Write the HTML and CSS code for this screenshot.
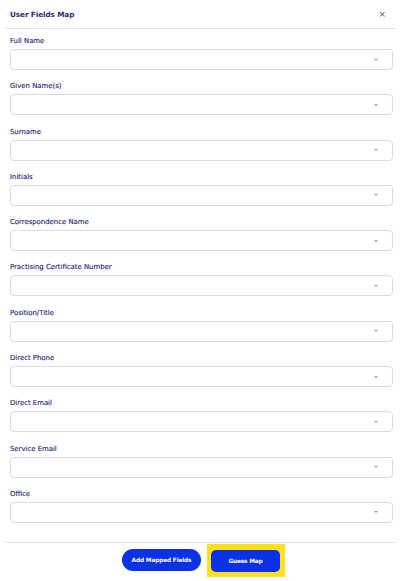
FILE: index.html
```html
<!DOCTYPE html>
<html>
<head>
<meta charset="utf-8">
<link rel="stylesheet" href="styles.css">
</head>
<body>
<div class="modal">
  <div class="header">
    <h1 class="title">User Fields Map</h1>
    <span class="close">&#215;</span>
  </div>
  <div class="body">
    <div class="field"><label class="label">Full Name</label><div class="select"><span class="caret"></span></div></div>
    <div class="field"><label class="label">Given Name(s)</label><div class="select"><span class="caret"></span></div></div>
    <div class="field"><label class="label">Surname</label><div class="select"><span class="caret"></span></div></div>
    <div class="field"><label class="label">Initials</label><div class="select"><span class="caret"></span></div></div>
    <div class="field"><label class="label">Correspondence Name</label><div class="select"><span class="caret"></span></div></div>
    <div class="field"><label class="label">Practising Certificate Number</label><div class="select"><span class="caret"></span></div></div>
    <div class="field"><label class="label">Position/Title</label><div class="select"><span class="caret"></span></div></div>
    <div class="field"><label class="label">Direct Phone</label><div class="select"><span class="caret"></span></div></div>
    <div class="field"><label class="label">Direct Email</label><div class="select"><span class="caret"></span></div></div>
    <div class="field"><label class="label">Service Email</label><div class="select"><span class="caret"></span></div></div>
    <div class="field"><label class="label">Office</label><div class="select"><span class="caret"></span></div></div>
  </div>
  <div class="footer">
    <button class="btn btn-pill">Add Mapped Fields</button>
    <span class="highlight"><button class="btn btn-square">Guess Map</button></span>
  </div>
</div>
</body>
</html>
```

FILE: styles.css
```css
* { box-sizing: border-box; }
html, body { margin: 0; padding: 0; background: #ffffff; }
body {
  font-family: "DejaVu Sans", "Open Sans", sans-serif;
  color: #27307a;
  width: 407px;
  height: 581px;
  overflow: hidden;
}
.modal { width: 407px; }
.header {
  height: 29px;
  margin: 0 11px 0 5px;
  padding: 0 10px 0 5px;
  display: flex;
  align-items: center;
  justify-content: space-between;
  border-bottom: 1px solid #e2e4ea;
}
.title {
  margin: 0;
  font-size: 7.3px;
  font-weight: bold;
  color: #1f2a78;
  letter-spacing: -0.1px;
}
.close {
  font-size: 9px;
  color: #555a66;
  line-height: 1;
}
.body {
  padding: 7px 14px 0 10px;
  display: flex;
  flex-direction: column;
  gap: 11.3px;
}
.field { display: flex; flex-direction: column; }
.label {
  font-size: 6.9px;
  line-height: 10px;
  height: 10px;
  margin-bottom: 3px;
  color: #1f2a78;
  font-weight: normal;
  -webkit-text-stroke: 0.15px #1f2a78;
}
.select {
  height: 21px;
  border: 1px solid #d8dbe2;
  border-radius: 4px;
  background: #fff;
  display: flex;
  align-items: center;
  justify-content: flex-end;
  padding-right: 14px;
}
.caret {
  width: 0;
  height: 0;
  border-left: 2px solid transparent;
  border-right: 2px solid transparent;
  border-top: 2px solid #9aa0ad;
}
.footer {
  margin: 19px 11px 0 5px;
  border-top: 1px solid #e2e4ea;
  padding-top: 1px;
  display: flex;
  justify-content: center;
  align-items: center;
  gap: 6px;
  padding-left: 6px;
}
.btn {
  font-family: "DejaVu Sans", "Open Sans", sans-serif;
  font-size: 5.8px;
  font-weight: bold;
  color: #ffffff;
  background: #0a31e3;
  border: none;
  height: 22px;
  letter-spacing: -0.15px;
  cursor: pointer;
}
.btn-pill {
  width: 79px;
  border-radius: 11px;
}
.btn-square {
  width: 69px;
  border-radius: 5px;
  display: block;
}
.highlight {
  background: #ffdf1e;
  padding: 6px 5px 5px 4px;
  display: block;
}
```
